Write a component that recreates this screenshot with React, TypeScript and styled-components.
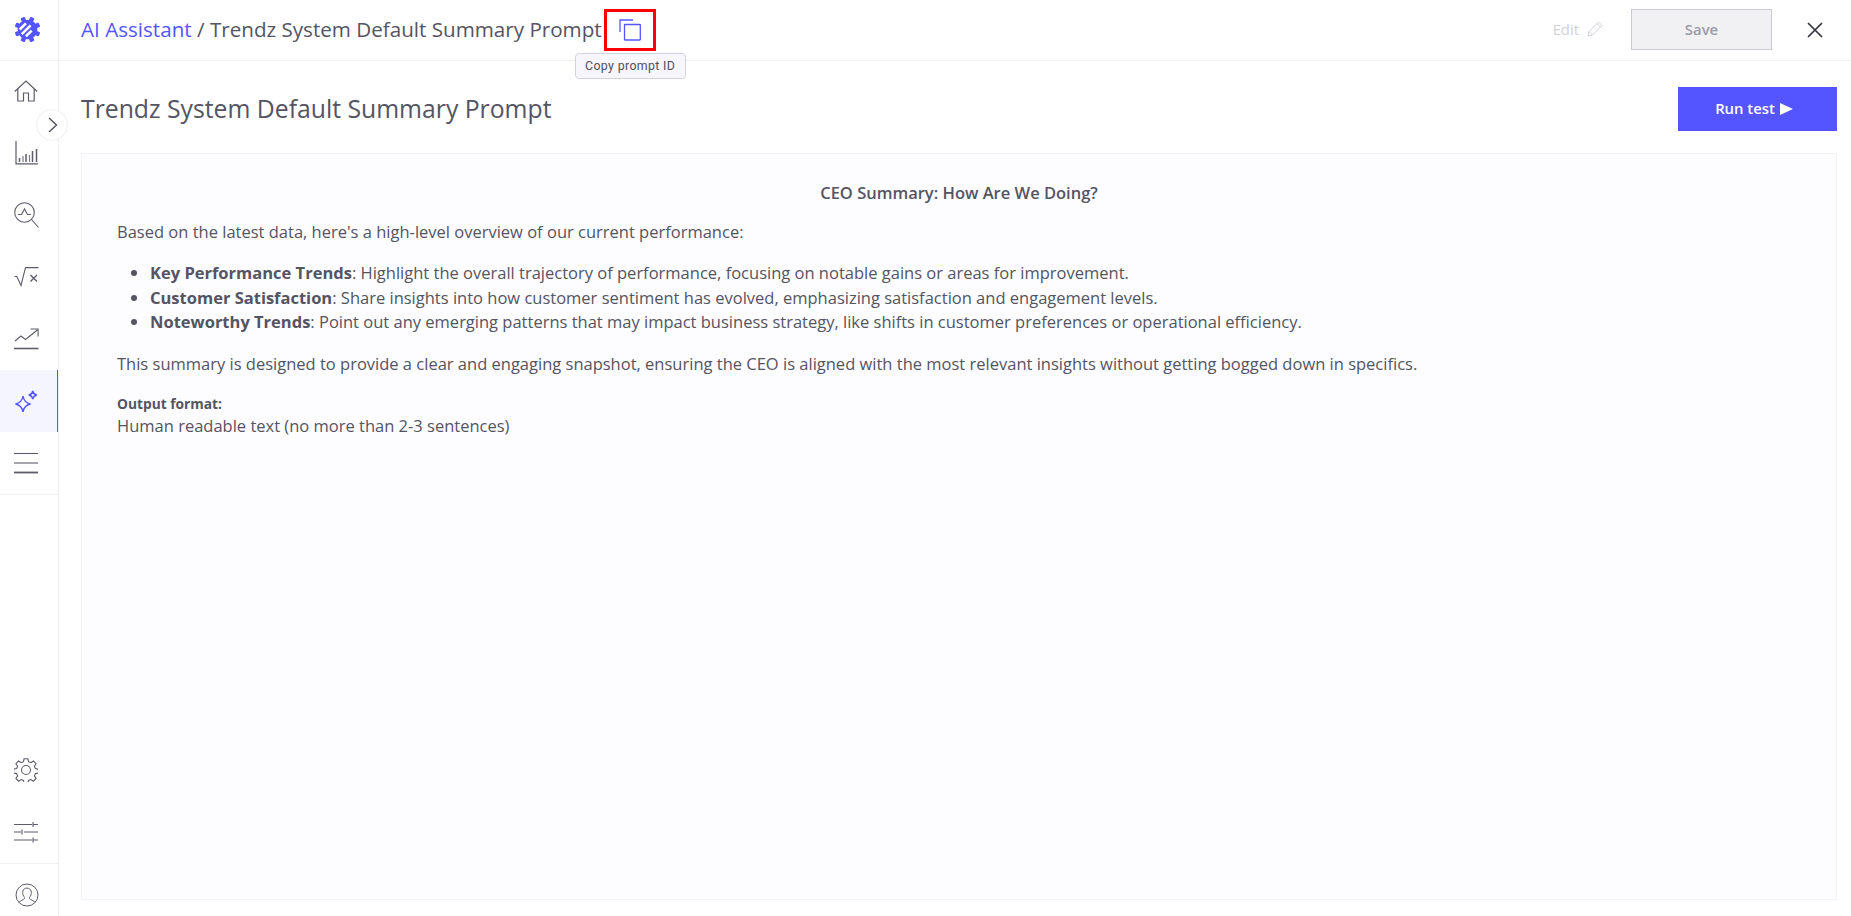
import React from "react";
import styled, { createGlobalStyle } from "styled-components";

const GlobalStyle = createGlobalStyle`
  html, body {
    margin: 0;
    padding: 0;
    height: 100%;
    background: #fff;
    font-family: "Open Sans", "Liberation Sans", sans-serif;
    color: #545463;
  }
  #root {
    height: 100%;
  }
`;

const ICON = "#5c5c6b";
const ACCENT = "#5555ff";

const HomeIcon = () => (
  <svg width="24" height="22" viewBox="0 0 24 22" fill="none" stroke={ICON} strokeWidth="1.2">
    <path d="M0.800 11.500 12 1l11.200 10.500" />
    <path d="M3.800 8.800V21h5.700v-8h5v8h5.700V8.800" />
  </svg>
);

const ChartIcon = () => (
  <svg width="23" height="24" viewBox="0 0 23 24" fill="none" stroke={ICON}>
    <path d="M1 0v22.800h22" strokeWidth="1.200" />
    <path d="M4.500 21v-4M11 21v-8M17.500 21v-11M21.500 21V8" strokeWidth="1.500" />
    <path d="M8 21v-6M14.500 21v-7" strokeWidth="1.200" opacity="0.8" />
  </svg>
);

const SearchPeakIcon = () => (
  <svg width="25" height="26" viewBox="0 0 25 26" fill="none" stroke={ICON} strokeWidth="1.1">
    <circle cx="10.500" cy="10.500" r="9.800" />
    <path d="m17.500 17.500 7 8" />
    <path d="M4 12.500h3.500l3-5.500 3 5.500h3.500" />
  </svg>
);

const SqrtIcon = () => (
  <svg width="25" height="20" viewBox="0 0 25 20" fill="none" stroke={ICON} strokeWidth="1.1">
    <path d="M0.500 9.500h2.300l4.200 9L11.500 0.600H24.500" />
    <path d="m16.500 8 6.500 6.500M23 8l-6.500 6.500" strokeWidth="1.400" />
  </svg>
);

const TrendIcon = () => (
  <svg width="25" height="22" viewBox="0 0 25 22" fill="none" stroke={ICON}>
    <path d="m1 13 6-5 4.500 3.500L24 1.500" strokeWidth="1.100" />
    <path d="M16.500 1h7.600v7.500" strokeWidth="1.100" />
    <path d="M0 20.500h24.500" strokeWidth="1.600" />
  </svg>
);

const SparkleIcon = () => (
  <svg width="23" height="23" viewBox="0 0 23 23" fill="none" stroke={ACCENT} strokeWidth="1.400">
    <path d="M8 6c.7 4.500 2.800 7 7.500 8-4.700 1-6.800 3.500-7.500 8-.7-4.500-2.800-7-7.500-8C5.200 13 7.300 10.500 8 6Z" />
    <path d="M17.800 0.800c.4 2.500 1.500 3.700 4 4.200-2.500.5-3.600 1.700-4 4.200-.4-2.500-1.500-3.700-4-4.200 2.500-.5 3.600-1.700 4-4.200Z" />
  </svg>
);

const MenuIcon = () => (
  <svg width="24" height="22" viewBox="0 0 24 22" fill="none" stroke={ICON}>
    <path d="M0 1.500h24" strokeWidth="1.100" />
    <path d="M0 11h24" strokeWidth="1.100" />
    <path d="M0 20.500h24" strokeWidth="1.800" />
  </svg>
);

const gearTeeth = [0, 45, 90, 135, 180, 225, 270, 315];

const GearIcon = () => (
  <svg width="24" height="24" viewBox="0 0 24 24" fill="none" stroke={ICON} strokeWidth="1.100">
    <circle cx="12" cy="12" r="4.500" />
    <path d="M10.100 0.700h3.800l.6 3 2.300 1 2.600-1.700 2.700 2.700-1.700 2.600 1 2.300 3 .6v3.800l-3 .6-1 2.300 1.700 2.600-2.700 2.700-2.600-1.700-2.300 1-.6 3h-3.800l-.6-3-2.300-1-2.600 1.700-2.700-2.700 1.700-2.600-1-2.300-3-.6v-3.800l3-.6 1-2.300-1.700-2.600 2.700-2.700 2.600 1.700 2.300-1Z" />
  </svg>
);

const SlidersIcon = () => (
  <svg width="24" height="22" viewBox="0 0 24 22" fill="none" stroke={ICON} strokeWidth="1.100">
    <path d="M0 3.500h18M19 1v5M19 3.500h5" />
    <path d="M0 11h7M8 8.500v5M10 11h14" />
    <path d="M0 19h18M19 16.500v5M19 19h5" />
  </svg>
);

const UserIcon = () => (
  <svg width="24" height="24" viewBox="0 0 24 24" fill="none" stroke={ICON} strokeWidth="1">
    <circle cx="12" cy="12" r="11" />
    <path d="M3.800 19.500c1.200-2.200 5.200-2.500 5.700-4.200.2-.8-.3-1.200-.9-2.200-1.800-3-1.200-8 3.400-8s5.200 5 3.400 8c-.6 1-1.100 1.400-.9 2.200.5 1.700 4.500 2 5.700 4.200" />
  </svg>
);

const LogoIcon = () => (
  <svg width="27" height="27" viewBox="0 0 26 26">
    <g fill={ACCENT}>
      <circle cx="13" cy="13" r="9.500" />
      {gearTeeth.map((a) => (
        <rect
          key={a}
          x="10.800"
          y="0.500"
          width="4.400"
          height="5"
          rx="1"
          transform={`rotate(${a + 22.5} 13 13)`}
        />
      ))}
    </g>
    <path d="m5.500 13 6-6M7.500 17.500l8.500-8.500M11.500 19.500l5.500-5.500" stroke="#fff" strokeWidth="2.400" fill="none" />
  </svg>
);

const CopyIcon = () => (
  <svg width="22" height="22" viewBox="0 0 22 22" fill="none" stroke={ACCENT} strokeWidth="1.300">
    <path d="M1 13V1h13" />
    <rect x="5.500" y="5.500" width="15.800" height="15.500" rx="0.500" />
  </svg>
);

const PencilIcon = () => (
  <svg width="16" height="16" viewBox="0 0 16 16" fill="none" stroke="#d2d2da" strokeWidth="1">
    <path d="M1 15l1-4.500L11.500 1 15 4.500 5.500 14Z" />
    <path d="m2 10.500 3.500 3.500M10 2.500 13.500 6" />
  </svg>
);

const CloseIcon = () => (
  <svg width="16" height="16" viewBox="0 0 16 16" fill="none" stroke="#33333f" strokeWidth="1.700">
    <path d="m1 1 14 14M15 1 1 15" />
  </svg>
);

const ChevronIcon = () => (
  <svg width="10" height="16" viewBox="0 0 10 16" fill="none" stroke="#50505f" strokeWidth="1.400">
    <path d="m1 1 7.500 7L1 15" />
  </svg>
);

const Page = styled.div`
  display: flex;
  height: 916px;
  overflow: hidden;
`;

const Sidebar = styled.aside`
  position: relative;
  flex: 0 0 59px;
  display: flex;
  flex-direction: column;
  border-right: 1px solid #f0f0f3;
  box-sizing: border-box;
`;

const LogoCell = styled.div`
  flex: 0 0 61px;
  display: flex;
  align-items: center;
  justify-content: center;
  padding: 0 4px 2px 0;
  box-sizing: border-box;
  border-bottom: 1px solid #f0f0f3;
`;

const NavList = styled.nav`
  display: flex;
  flex-direction: column;
  flex: 1;
  margin-top: -1px;
`;

const NavItem = styled.div<{ $active?: boolean }>`
  flex: 0 0 62px;
  display: flex;
  align-items: center;
  justify-content: center;
  padding-right: 5px;
  box-sizing: border-box;
  background: ${(p) => (p.$active ? "#f5f5ff" : "transparent")};
  border-right: ${(p) => (p.$active ? `1px solid ${ACCENT}` : "1px solid transparent")};
`;

const NavDivider = styled.div`
  height: 1px;
  background: #f0f0f3;
`;

const Spacer = styled.div`
  flex: 1;
`;

const ProfileCell = styled.div`
  flex: 0 0 53px;
  display: flex;
  align-items: center;
  justify-content: center;
  border-top: 1px solid #f0f0f3;
  box-sizing: border-box;
  padding: 10px 5px 0 0;
`;

const Toggle = styled.div`
  position: absolute;
  left: 36px;
  top: 109px;
  width: 32px;
  height: 32px;
  border-radius: 50%;
  background: #fff;
  border: 1px solid #f0f0f3;
  box-sizing: border-box;
  display: flex;
  align-items: center;
  justify-content: center;
  padding-left: 2px;
  z-index: 2;
`;

const Main = styled.main`
  flex: 1;
  min-width: 0;
  display: flex;
  flex-direction: column;
`;

const Header = styled.header`
  flex: 0 0 61px;
  box-sizing: border-box;
  display: flex;
  align-items: center;
  padding: 0 14px 1px 22px;
  border-bottom: 1px solid #f0f0f3;
`;

const Crumbs = styled.div`
  font-size: 20.625px;
  white-space: nowrap;
  margin-top: -2px;
`;

const CrumbLink = styled.span`
  color: ${ACCENT};
`;

const CopyWrap = styled.div`
  position: relative;
  margin-left: 2px;
`;

const CopyButton = styled.div`
  width: 52px;
  height: 42px;
  box-sizing: border-box;
  border: 3px solid #ff0000;
  display: flex;
  align-items: center;
  justify-content: center;
`;

const Tooltip = styled.div`
  position: absolute;
  left: -29px;
  top: 44px;
  width: 111px;
  height: 26px;
  box-sizing: border-box;
  display: flex;
  align-items: center;
  justify-content: center;
  font-family: Roboto, "Liberation Sans", sans-serif;
  font-size: 12.375px;
  letter-spacing: 0.35px;
  color: #50505f;
  background: #f6f6fc;
  border: 1px solid #d4d4dc;
  border-radius: 4px;
  z-index: 3;
  white-space: nowrap;
`;

const HeaderActions = styled.div`
  margin-left: auto;
  display: flex;
  align-items: center;
`;

const EditLink = styled.div`
  display: flex;
  align-items: center;
  gap: 8px;
  font-size: 14.85px;
  color: #d2d2da;
  margin-right: 28px;
  padding-bottom: 2px;
`;

const SaveButton = styled.div`
  width: 141px;
  height: 41px;
  box-sizing: border-box;
  display: flex;
  align-items: center;
  justify-content: center;
  padding-bottom: 2px;
  font-size: 14.85px;
  font-weight: 600;
  color: #9a9aa6;
  background: #f1f1f4;
  border: 1px solid #cacad0;
  margin-right: 35px;
`;

const CloseButton = styled.div`
  display: flex;
  margin-right: 14px;
`;

const Body = styled.div`
  flex: 1;
  min-height: 0;
  display: flex;
  flex-direction: column;
  padding: 26px 14px 16px 22px;
`;

const TitleRow = styled.div`
  flex: 0 0 44px;
  display: flex;
  align-items: center;
  justify-content: space-between;
  margin-bottom: 22px;
`;

const Title = styled.h1`
  margin: -2px 0 0;
  font-size: 24.75px;
  font-weight: 400;
`;

const RunButton = styled.div`
  width: 159px;
  height: 44px;
  box-sizing: border-box;
  display: flex;
  align-items: center;
  justify-content: center;
  gap: 5px;
  padding: 0 7px 2px 0;
  background: ${ACCENT};
  color: #fff;
  font-size: 14.85px;
  font-weight: 600;
`;

const PlayMark = styled.span`
  width: 0;
  height: 0;
  margin-top: 2px;
  border-left: 13px solid #fff;
  border-top: 6.500px solid transparent;
  border-bottom: 6.500px solid transparent;
`;

const PromptBox = styled.section`
  flex: 1;
  box-sizing: border-box;
  background: #fdfdff;
  border: 1px solid #f3f3f6;
  padding: 29px 35px 0;
  font-size: 16.5px;
  line-height: 24.75px;
`;

const PromptHeading = styled.div`
  text-align: center;
  font-size: 16.5px;
  line-height: 20px;
  font-weight: 600;
`;

const Paragraph = styled.p`
  margin: 16.5px 0;
`;

const Bullets = styled.ul`
  margin: 16.5px 0;
  padding-left: 33px;
`;

const FormatLabel = styled.div`
  font-size: 13.75px;
  font-weight: 700;
  line-height: 21px;
  margin-top: 17px;
`;

const navTop = [
  { icon: <HomeIcon /> },
  { icon: <ChartIcon /> },
  { icon: <SearchPeakIcon /> },
  { icon: <SqrtIcon /> },
  { icon: <TrendIcon /> },
  { icon: <SparkleIcon />, active: true },
  { icon: <MenuIcon /> },
];

const App: React.FC = () => {
  return (
    <Page>
      <GlobalStyle />
      <Sidebar>
        <LogoCell>
          <LogoIcon />
        </LogoCell>
        <NavList>
          {navTop.map((item, i) => (
            <NavItem key={i} $active={item.active}>
              {item.icon}
            </NavItem>
          ))}
          <NavDivider />
          <Spacer />
          <NavItem>
            <GearIcon />
          </NavItem>
          <NavItem>
            <SlidersIcon />
          </NavItem>
          <ProfileCell>
            <UserIcon />
          </ProfileCell>
        </NavList>
        <Toggle>
          <ChevronIcon />
        </Toggle>
      </Sidebar>
      <Main>
        <Header>
          <Crumbs>
            <CrumbLink>AI Assistant</CrumbLink> / Trendz System Default Summary Prompt
          </Crumbs>
          <CopyWrap>
            <CopyButton>
              <CopyIcon />
            </CopyButton>
            <Tooltip>Copy prompt ID</Tooltip>
          </CopyWrap>
          <HeaderActions>
            <EditLink>
              Edit
              <PencilIcon />
            </EditLink>
            <SaveButton>Save</SaveButton>
            <CloseButton>
              <CloseIcon />
            </CloseButton>
          </HeaderActions>
        </Header>
        <Body>
          <TitleRow>
            <Title>Trendz System Default Summary Prompt</Title>
            <RunButton>
              Run test
              <PlayMark />
            </RunButton>
          </TitleRow>
          <PromptBox>
            <PromptHeading>CEO Summary: How Are We Doing?</PromptHeading>
            <Paragraph>
              Based on the latest data, here's a high-level overview of our current performance:
            </Paragraph>
            <Bullets>
              <li>
                <strong>Key Performance Trends</strong>: Highlight the overall trajectory of
                performance, focusing on notable gains or areas for improvement.
              </li>
              <li>
                <strong>Customer Satisfaction</strong>: Share insights into how customer sentiment
                has evolved, emphasizing satisfaction and engagement levels.
              </li>
              <li>
                <strong>Noteworthy Trends</strong>: Point out any emerging patterns that may impact
                business strategy, like shifts in customer preferences or operational efficiency.
              </li>
            </Bullets>
            <Paragraph>
              This summary is designed to provide a clear and engaging snapshot, ensuring the CEO is
              aligned with the most relevant insights without getting bogged down in specifics.
            </Paragraph>
            <FormatLabel>Output format:</FormatLabel>
            Human readable text (no more than 2-3 sentences)
          </PromptBox>
        </Body>
      </Main>
    </Page>
  );
};

export default App;
